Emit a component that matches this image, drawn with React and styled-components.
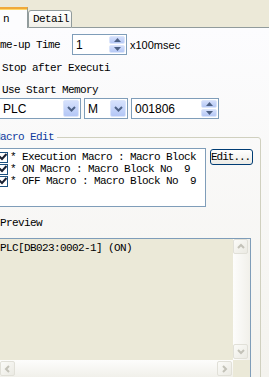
import React from 'react';
import styled, { createGlobalStyle } from 'styled-components';

const MONO = '"Liberation Mono", "DejaVu Sans Mono", monospace';
const SANS = '"Liberation Sans", Arial, sans-serif';

const Global = createGlobalStyle`
  html, body { margin: 0; padding: 0; }
  body { width: 269px; height: 377px; overflow: hidden; background: #f4f3ee; }
  #root { width: 269px; height: 377px; }
`;

const Window = styled.div`
  width: 269px;
  height: 377px;
  overflow: hidden;
  display: flex;
  flex-direction: column;
  background: #ece9d8;
  font-family: ${MONO};
  font-size: 11px;
  letter-spacing: -0.6px;
  color: #000;
`;

const TabStrip = styled.div`
  height: 28px;
  flex: none;
  display: flex;
  align-items: flex-end;
`;

const ActiveTab = styled.div`
  width: 24px;
  height: 19px;
  background: #fcfcfe;
  border-top: 2px solid #f0a93a;
  box-shadow: inset 0 1px 0 #ffd76a;
  border-right: 1px solid #919b9c;
  display: flex;
  align-items: center;
  padding-left: 3px;
  box-sizing: content-box;
  line-height: 12px;
`;

const Tab = styled.div`
  width: 44px;
  height: 18px;
  border: 1px solid #919b9c;
  border-radius: 3px 3px 0 0;
  background: linear-gradient(#ffffff, #f0efe8);
  display: flex;
  align-items: center;
  padding-left: 4px;
  box-sizing: border-box;
  line-height: 12px;
`;

const TabFiller = styled.div`
  flex: 1;
  border-bottom: 1px solid #919b9c;
`;

const Page = styled.div`
  flex: 1;
  min-height: 0;
  overflow: hidden;
  background: linear-gradient(#fcfcfe, #f4f3ee);
`;

const Inner = styled.div`
  margin-left: -20px;
  width: 289px;
  display: flex;
  flex-direction: column;
`;

const Row = styled.div`
  flex: none;
  display: flex;
  align-items: center;
  height: ${p => p.$h}px;
  margin-top: ${p => p.$mt || 0}px;
  padding-left: ${p => p.$indent || 0}px;
  gap: ${p => p.$gap || 0}px;
`;

const Label = styled.span`
  flex: none;
  width: ${p => (p.$w ? `${p.$w}px` : 'auto')};
  white-space: pre;
  line-height: 12px;
`;

const SansText = styled.span`
  font-family: ${SANS};
  font-size: ${p => p.$size || 12}px;
  letter-spacing: 0;
  line-height: 14px;
  white-space: pre;
  margin-left: ${p => p.$ml || 0}px;
`;

const HiddenCheck = styled.span`
  flex: none;
  width: 11px;
  height: 11px;
  border: 1px solid #1c5180;
  background: linear-gradient(135deg, #dcdcd7, #ffffff);
`;

const Field = styled.div`
  flex: none;
  width: ${p => p.$w}px;
  height: 21px;
  box-sizing: border-box;
  border: 1px solid #7f9db9;
  background: #fff;
  display: flex;
  align-items: center;
  justify-content: space-between;
  padding: 1px 1px 1px ${p => p.$pl || 3}px;
`;

const SpinCol = styled.div`
  width: 16px;
  height: 17px;
  display: flex;
  flex-direction: column;
  gap: 1px;
`;

const SpinBtn = styled.div`
  flex: 1;
  border-radius: 2px;
  border: 1px solid #dbe5fb;
  background: linear-gradient(#d3defb, #b5c8f5);
  display: flex;
  align-items: center;
  justify-content: center;
`;

const ComboBtn = styled.div`
  width: 16px;
  height: 17px;
  box-sizing: border-box;
  border-radius: 2px;
  border: 1px solid #dbe5fb;
  background: linear-gradient(#d6e1fc, #b4c7f6);
  display: flex;
  align-items: center;
  justify-content: center;
`;

const Group = styled.fieldset`
  margin: 12px 0 0 4px;
  padding: 0 7px 10px 0;
  width: 277px;
  box-sizing: border-box;
  border: 1px solid #d0d0bf;
  border-radius: 3px;
  min-inline-size: 0;
`;

const Legend = styled.legend`
  margin-left: 8px;
  padding: 0 3px 0 1px;
  color: #0e3a9e;
  line-height: 12px;
  font-size: 11px;
`;

const ListRow = styled.div`
  display: flex;
  align-items: flex-start;
  gap: 4px;
  margin-top: 5px;
  margin-left: 8px;
`;

const ListBox = styled.div`
  width: 213px;
  height: 59px;
  box-sizing: border-box;
  border: 1px solid #7f9db9;
  background: #fff;
  padding-top: 2px;
  overflow: hidden;
`;

const Item = styled.div`
  height: 12px;
  display: flex;
  align-items: center;
  gap: 2px;
  padding-left: 3px;
  white-space: pre;
  line-height: 12px;
`;

const ItemCheck = styled.span`
  flex: none;
  width: 11px;
  height: 11px;
  box-sizing: border-box;
  border: 1px solid #1c5180;
  background: #fff;
  display: flex;
  align-items: center;
  justify-content: center;
`;

const Button = styled.div`
  margin-top: 1px;
  width: 43px;
  height: 16px;
  box-sizing: border-box;
  border: 1px solid #003c74;
  border-radius: 3px;
  background: linear-gradient(#ffffff, #ecebe6);
  display: flex;
  align-items: center;
  white-space: pre;
  letter-spacing: -1px;
  line-height: 12px;
`;

const PreviewLabel = styled.div`
  margin: 10px 0 0 15px;
  line-height: 12px;
  height: 12px;
`;

const PreviewBox = styled.div`
  margin: 9px 0 0 14px;
  width: 252px;
  height: 140px;
  box-sizing: border-box;
  border: 1px solid #7f9db9;
  background: #ebe9d8;
  display: grid;
  grid-template-columns: 1fr 17px;
  grid-template-rows: 1fr 17px;
`;

const PreviewText = styled.div`
  padding-top: 3px;
  white-space: pre;
  line-height: 12px;
`;

const VBar = styled.div`
  background: linear-gradient(90deg, #fdfdfc, #f1f0ea);
  display: flex;
  flex-direction: column;
  justify-content: space-between;
  padding: 0 1px 1px 0;
`;

const HBar = styled.div`
  background: linear-gradient(#fdfdfc, #f1f0ea);
  display: flex;
  justify-content: space-between;
  padding: 1px 1px 0 0;
`;

const ScrollBtn = styled.div`
  width: 15px;
  height: 15px;
  box-sizing: border-box;
  border: 1px solid #e1e0d8;
  border-radius: 2px;
  background: linear-gradient(135deg, #fbfbf8, #ebeae3);
  display: flex;
  align-items: center;
  justify-content: center;
`;

const Corner = styled.div`
  background: #ebe9d8;
`;

const Chevron = ({ dir, color = '#c3c2b8', w = 7, sw = 2 }) => {
  const paths = {
    up: 'M1 5 L4 2 L7 5',
    down: 'M1 2 L4 5 L7 2',
    left: 'M5 1 L2 4 L5 7',
    right: 'M2 1 L5 4 L2 7',
  };
  return (
    <svg width={w + 1} height={w + 1} viewBox="0 0 8 8">
      <path d={paths[dir]} fill="none" stroke={color} strokeWidth={sw} />
    </svg>
  );
};

const Tri = ({ up }) => (
  <svg width="7" height="4" viewBox="0 0 7 4">
    <path d={up ? 'M0 4 L3.5 0 L7 4Z' : 'M0 0 L3.5 4 L7 0Z'} fill="#4d6185" />
  </svg>
);

const Spinner = ({ w, value, size }) => (
  <Field $w={w}>
    <SansText $size={size}>{value}</SansText>
    <SpinCol>
      <SpinBtn><Tri up /></SpinBtn>
      <SpinBtn><Tri /></SpinBtn>
    </SpinCol>
  </Field>
);

const Combo = ({ w, value }) => (
  <Field $w={w}>
    <SansText>{value}</SansText>
    <ComboBtn>
      <svg width="9" height="6" viewBox="0 0 9 6">
        <path d="M1 1 L4.5 4.5 L8 1" fill="none" stroke="#4d6185" strokeWidth="2" />
      </svg>
    </ComboBtn>
  </Field>
);

const Check = () => (
  <svg width="8" height="8" viewBox="0 0 8 8">
    <path d="M0.5 3.5 L3 6 L7.5 1" fill="none" stroke="#1b2233" strokeWidth="2" />
  </svg>
);

export default function App() {
  return (
    <>
      <Global />
      <Window>
        <TabStrip>
          <ActiveTab>n</ActiveTab>
          <Tab>Detail</Tab>
          <TabFiller />
        </TabStrip>
        <Page>
          <Inner>
            <Row $h={21} $mt={6} $indent={20}>
              <Label $w={72}>me-up Time</Label>
              <Spinner w={55} value="1" size={12} />
              <SansText $size={11} $ml={3}>x100msec</SansText>
            </Row>
            <Row $h={26} $indent={6} $gap={3}>
              <HiddenCheck />
              <Label>Stop after Executi</Label>
            </Row>
            <Row $h={17} $indent={6} $gap={3}>
              <HiddenCheck />
              <Label>Use Start Memory</Label>
            </Row>
            <Row $h={21} $indent={19} $gap={3}>
              <Combo w={82} value="PLC" />
              <Combo w={44} value="M" />
              <Spinner w={88} value="001806" size={12} />
            </Row>
            <Group>
              <Legend>Macro Edit</Legend>
              <ListRow>
                <ListBox>
                  <Item><ItemCheck><Check /></ItemCheck>* Execution Macro : Macro Block</Item>
                  <Item><ItemCheck><Check /></ItemCheck>* ON Macro : Macro Block No  9</Item>
                  <Item><ItemCheck><Check /></ItemCheck>* OFF Macro : Macro Block No  9</Item>
                </ListBox>
                <Button>Edit...</Button>
              </ListRow>
              <PreviewLabel>Preview</PreviewLabel>
              <PreviewBox>
                <PreviewText>PLC[DB023:0002-1] (ON)</PreviewText>
                <VBar>
                  <ScrollBtn><Chevron dir="up" /></ScrollBtn>
                  <ScrollBtn><Chevron dir="down" /></ScrollBtn>
                </VBar>
                <HBar>
                  <ScrollBtn><Chevron dir="left" /></ScrollBtn>
                  <ScrollBtn><Chevron dir="right" /></ScrollBtn>
                </HBar>
                <Corner />
              </PreviewBox>
            </Group>
          </Inner>
        </Page>
      </Window>
    </>
  );
}
